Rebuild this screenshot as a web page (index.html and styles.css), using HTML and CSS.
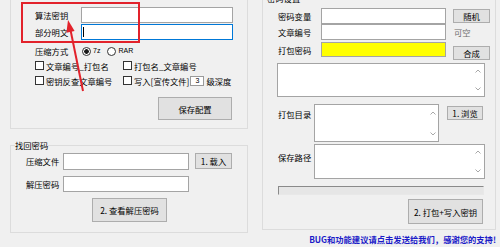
FILE: index.html
```html
<!DOCTYPE html>
<html lang="zh-CN">
<head>
<meta charset="utf-8">
<title>打包工具</title>
<link rel="stylesheet" href="styles.css">
</head>
<body>
<div class="app">
  <div class="col-left">
    <div class="group g-config">
      <div class="form-top">
        <span class="lbl">算法密钥</span><div class="tb"></div>
        <span class="lbl">部分明文</span><div class="tb focus"><span class="caret"></span></div>
      </div>
      <div class="opt-row">
        <span class="lbl opt-lbl">压缩方式</span>
        <span class="radio on"></span><span class="latin r-text">7z</span>
        <span class="radio r2"></span><span class="latin r-text">RAR</span>
      </div>
      <div class="chk-grid">
        <div class="chk"><span class="box"></span><span>文章编号_打包名</span></div>
        <div class="chk"><span class="box"></span><span>打包名_文章编号</span></div>
        <div class="chk"><span class="box"></span><span>密钥反查文章编号</span></div>
        <div class="chk"><span class="box"></span><span>写入[宣传文件]</span><span class="num">3</span><span>级深度</span></div>
      </div>
      <div class="btn btn-save">保存配置</div>
    </div>

    <div class="group g-find">
      <span class="legend">找回密码</span>
      <div class="row">
        <span class="lbl w37">压缩文件</span>
        <div class="tb tb-f1"></div>
        <div class="btn btn-load">1. 载入</div>
      </div>
      <div class="row row2">
        <span class="lbl w37">解压密码</span>
        <div class="tb tb-f2"></div>
      </div>
      <div class="btn btn-view">2. 查看解压密码</div>
    </div>
  </div>

  <div class="col-right">
    <div class="group g-pack">
      <span class="legend">密码设置</span>
      <div class="r-grid">
        <span class="lbl">密码变量</span><div class="tb"></div><div class="btn btn-sm">随机</div>
        <span class="lbl">文章编号</span><div class="tb"></div><span class="hint">可空</span>
        <span class="lbl r3">打包密码</span><div class="tb yellow"></div><div class="btn btn-sm btn-merge">合成</div>
      </div>
      <div class="ta ta-big">
        <div class="sb">
          <svg width="6" height="4" viewBox="0 0 6 4"><path d="M0.5 3.5 L3 1 L5.5 3.5" fill="none" stroke="#a8a8a8" stroke-width="1"/></svg>
          <svg width="6" height="4" viewBox="0 0 6 4"><path d="M0.5 0.5 L3 3 L5.5 0.5" fill="none" stroke="#a8a8a8" stroke-width="1"/></svg>
        </div>
      </div>
      <div class="row row-dir">
        <span class="lbl w36 lbl-dir">打包目录</span>
        <div class="ta ta-dir">
          <div class="sb">
            <svg width="6" height="4" viewBox="0 0 6 4"><path d="M0.5 3.5 L3 1 L5.5 3.5" fill="none" stroke="#a8a8a8" stroke-width="1"/></svg>
            <svg width="6" height="4" viewBox="0 0 6 4"><path d="M0.5 0.5 L3 3 L5.5 0.5" fill="none" stroke="#a8a8a8" stroke-width="1"/></svg>
          </div>
        </div>
        <div class="btn btn-browse">1. 浏览</div>
      </div>
      <div class="row row-save">
        <span class="lbl w36 lbl-save">保存路径</span>
        <div class="ta ta-save">
          <div class="sb">
            <svg width="6" height="4" viewBox="0 0 6 4"><path d="M0.5 3.5 L3 1 L5.5 3.5" fill="none" stroke="#a8a8a8" stroke-width="1"/></svg>
            <svg width="6" height="4" viewBox="0 0 6 4"><path d="M0.5 0.5 L3 3 L5.5 0.5" fill="none" stroke="#a8a8a8" stroke-width="1"/></svg>
          </div>
        </div>
      </div>
      <div class="progress"></div>
      <div class="btn btn-pack">2. 打包+写入密钥</div>
    </div>
    <div class="footer">BUG和功能建议请点击发送给我们，感谢您的支持!</div>
  </div>
</div>

<svg class="annot" width="500" height="247" viewBox="0 0 500 247">
  <rect x="22" y="3" width="117" height="39" fill="none" stroke="#e2222b" stroke-width="2"/>
  <line x1="83" y1="91" x2="70.5" y2="30" stroke="#e2222b" stroke-width="2"/>
  <polygon points="68,20 74.6,31 66.4,32.8" fill="#e2222b"/>
</svg>
</body>
</html>
```

FILE: styles.css
```css
* { box-sizing: border-box; }
html, body { margin: 0; padding: 0; }
body {
  width: 500px;
  height: 247px;
  overflow: hidden;
  position: relative;
  background: #f0f0f0;
  font-family: "Noto Sans CJK SC", "Noto Sans", sans-serif;
  font-size: 8.3px;
  line-height: 12px;
  color: #000;
}
.app {
  display: flex;
  gap: 14px;
  padding-left: 10px;
  margin-top: -3px;
}
.col-left { width: 238px; display: flex; flex-direction: column; }
.col-right { width: 234px; margin-top: 1px; display: flex; flex-direction: column; }

.group { position: relative; border: 1px solid #dcdcdc; }
.legend {
  position: absolute;
  top: -7px;
  left: 4px;
  line-height: 12px;
  background: #f0f0f0;
  white-space: nowrap;
}
.lbl { white-space: nowrap; }
.w37 { width: 37px; flex: none; }
.w36 { width: 36px; flex: none; }

.tb { background: #fff; border: 1px solid #a4a4a4; height: 16px; }
.tb.focus { border-color: #0078d7; display: flex; align-items: center; }
.caret { width: 1px; height: 10px; background: #000; margin-left: 1px; }
.tb.yellow { background: #ffff00; }

.btn {
  display: flex;
  align-items: center;
  justify-content: center;
  background: #e1e1e1;
  border: 1px solid #adadad;
  white-space: nowrap;
  flex: none;
}

/* group 1 */
.g-config { padding: 9px 14px 8px 24px; }
.form-top {
  display: grid;
  grid-template-columns: 46px 152px;
  grid-auto-rows: 16px;
  row-gap: 1px;
  align-items: center;
}
.opt-row { display: flex; align-items: center; height: 14px; margin-top: 4px; }
.opt-lbl { width: 46px; }
.radio {
  width: 9px; height: 9px; border-radius: 50%;
  border: 1px solid #333; background: #fff; margin-left: 1px; flex: none;
}
.radio.on { background: radial-gradient(circle, #1a1a1a 0 2px, #fff 2.6px); }
.radio.r2 { margin-left: 7px; }
.latin { font-family: "Liberation Sans", sans-serif; font-size: 7px; }
.r-text { margin-left: 2px; }
.chk-grid {
  display: grid;
  grid-template-columns: 88px auto;
  grid-auto-rows: 15px;
  align-items: center;
}
.chk { display: flex; align-items: center; gap: 2px; white-space: nowrap; }
.box { width: 9px; height: 9px; border: 1px solid #333; background: #fff; flex: none; }
.num {
  width: 14px; height: 10px; border: 1px solid #9a9a9a; background: #fff;
  font-family: "Liberation Sans", sans-serif; font-size: 7px; line-height: 8px;
  text-align: center; margin: 0 0 0 -1px;
}
.btn-save { margin-top: 9px; margin-left: 123px; width: 74px; height: 23px; }

/* group 2 */
.g-find { margin-top: 16px; padding: 7px 0 10px 15px; }
.row { display: flex; align-items: flex-start; }
.row .lbl { line-height: 17px; }
.tb-f1 { width: 126px; height: 17px; }
.tb-f2 { width: 126px; height: 16px; }
.btn-load { margin-left: 6px; width: 37px; height: 16px; }
.row2 { margin-top: 6px; }
.row2 .lbl { line-height: 16px; }
.btn-view { margin-top: 6px; margin-left: 66px; width: 75px; height: 24px; }

/* right group */
.g-pack { padding: 9px 0 5px 15px; }
.r-grid {
  display: grid;
  grid-template-columns: 36px 125px 37px;
  grid-template-rows: 16px 16px 20px;
  column-gap: 7px;
  align-items: center;
}
.btn-sm { height: 14px; }
.hint { color: #6d6d6d; margin-left: 1px; }
.r-grid .yellow { align-self: start; margin-top: 2px; height: 15px; }
.r-grid .r3 { align-self: start; margin-top: 4px; }
.btn-merge { align-self: end; }

.ta { background: #fff; border: 1px solid #a4a4a4; display: flex; justify-content: flex-end; flex: none; }
.sb { display: flex; flex-direction: column; justify-content: space-between; padding: 5px 3px; }
.ta-big { margin-top: 3px; margin-left: -1px; width: 208px; height: 34px; }
.row-dir { margin-top: 7px; }
.lbl-dir { padding-top: 2px; }
.ta-dir { width: 125px; height: 38px; }
.ta-dir .sb { padding: 6px 2px 5px; }
.btn-browse { margin-left: 8px; margin-top: 2px; width: 36px; height: 14px; }
.row-save { margin-top: 2px; }
.lbl-save { padding-top: 5px; }
.ta-save { width: 171px; height: 35px; }
.progress {
  margin-top: 7px; width: 206px; height: 9px;
  background: #e6e6e6;
  border-top: 1px solid #8a8a8a; border-left: 1px solid #8a8a8a;
  border-right: 1px solid #e8e8e8; border-bottom: 1px solid #e8e8e8;
}
.btn-pack { margin-top: 4px; margin-left: 130px; width: 75px; height: 25px; }

.footer {
  margin-top: 3px;
  text-align: right;
  color: #1a1ac8;
  font-weight: bold;
  white-space: nowrap;
  line-height: 12px;
}

.annot { position: absolute; left: 0; top: 0; pointer-events: none; }
```
